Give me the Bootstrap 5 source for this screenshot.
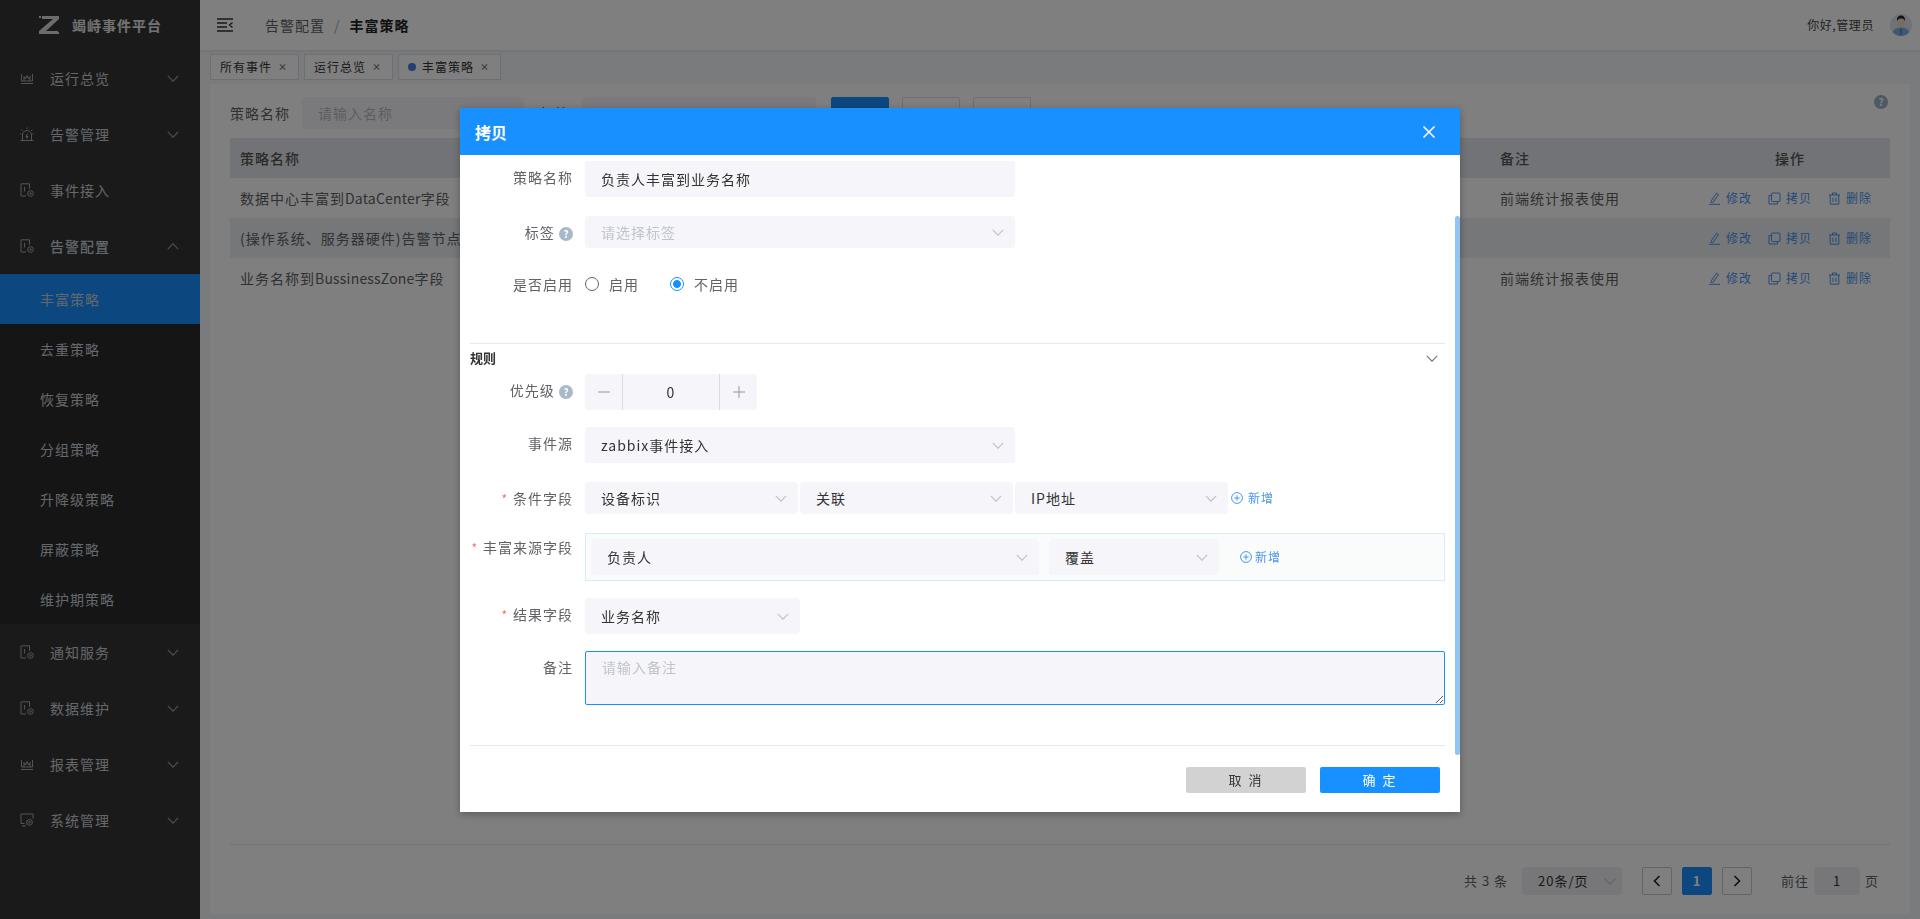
<!DOCTYPE html>
<html lang="zh">
<head>
<meta charset="utf-8">
<title>竭峙事件平台</title>
<link rel="stylesheet" href="https://cdn.jsdelivr.net/npm/bootstrap@5.3.0/dist/css/bootstrap.min.css">
<style>
html,body{height:100%;}
body{font-family:"Noto Sans CJK SC","Liberation Sans",sans-serif;font-size:14px;letter-spacing:1px;color:#333;background:#f5f7fa;overflow:hidden;}
.app-main{min-width:0;}
.app-side{width:200px;flex:none;background:#353535;color:#c9cfd6;}
.brand{height:50px;padding-left:39px;gap:13px;font-weight:700;color:#e6e6e6;}
.side-item{height:56px;padding-left:20px;padding-right:21px;gap:16px;}
.side-item.open .chev{transform:rotate(180deg);}
.side-sub{height:50px;padding-left:40px;background:#2a2a2a;}
.side-sub.on{background:#1890ff;}
.ico{width:14px;height:14px;flex:none;stroke:#a8a8a8;fill:none;stroke-width:1;}
.chev{width:12px;height:7px;flex:none;stroke:#c0c4cc;fill:none;stroke-width:1.2;}
.app-side .chev{stroke:#9a9a9a;}
.top-bar{height:50px;background:#fff;padding:0 8px 0 17px;box-shadow:0 1px 4px rgba(0,0,0,.1);position:relative;}
.crumb{margin-left:32px;color:#606266;gap:9px;}
.crumb b{color:#222;}
.crumb i{font-style:normal;color:#aaa;}
.hi{font-size:12px;color:#444;margin-right:16px;letter-spacing:.6px;}
.tag-bar{height:34px;padding:4px 10px;gap:5px;}
.tab-chip{height:26px;padding:0 11px 0 9px;border:1px solid #dcdfe6;background:#fff;font-size:12px;color:#333;gap:6px;}
.tab-chip .x{font-size:9px;color:#777;font-weight:700;letter-spacing:0;}
.tab-dot{width:8px;height:8px;border-radius:50%;background:#4a7fe8;}
.page-card{flex:1;background:#fff;margin:0 10px 5px;padding:13px 20px 0;min-height:0;}
.filter-row{height:32px;margin-bottom:9px;}
.q-label{color:#606266;width:72px;}
.q-box{height:32px;background:#f5f5fa;border-radius:4px;padding:0 16px;display:flex;align-items:center;color:#bbb;}
.q-box.w1{width:222px;margin-right:16px;}
.q-box.w2{width:234px;margin-left:12px;margin-right:15px;}
.q-btn{width:58px;height:32px;border:1px solid #dcdfe6;margin-right:13px;border-radius:2px;}
.q-btn.pri{background:#1890ff;border-color:#1890ff;}
.help-dot{width:14px;height:14px;border-radius:50%;background:#a9b9c9;color:#fff;font-size:10px;line-height:14px;text-align:center;letter-spacing:0;display:inline-block;font-weight:700;flex:none;}
.big-help{margin-left:auto;margin-right:2px;margin-top:-22px;background:#9fb2c6;}
.data-table{table-layout:fixed;width:100%;margin:0;--bs-table-bg:transparent;}
.data-table .col-a{width:1260px;}
.data-table .col-b{width:200px;}
.data-table .col-c{width:200px;}
.data-table th,.data-table td{border:0;padding:0 10px;height:40px;vertical-align:middle;color:#606266;font-weight:400;white-space:nowrap;overflow:hidden;}
.data-table thead th{background:#e5e7ec;color:#555;font-weight:500;}
.data-table tbody tr:nth-child(2) td{background:#eceef2;}
.data-table .op-cell{padding:0;}
.lat{letter-spacing:.2px;}
.op-wrap{padding-right:2px;}
.op-link{font-size:12px;color:#4a94f0;gap:5px;margin-right:17px;width:43px;}
.op-link svg{width:13px;height:13px;stroke:currentColor;fill:none;flex:none;}
.pager-line{border-top:1px solid #e4e6eb;margin-top:546px;padding-top:22px;padding-right:11px;justify-content:flex-end;font-size:13px;color:#606266;}
.pg-sel{width:100px;height:28px;background:#eeeef3;border-radius:4px;margin:0 20px 0 14px;padding:0 6px 0 16px;color:#333;}
.pg-btn{width:30px;height:28px;border:1px solid #c8c8cc;border-radius:2px;margin-right:10px;color:#333;}
.pg-btn svg{width:8px;height:12px;stroke:#222;stroke-width:1.6;fill:none;}
.pg-btn.on{background:#1890ff;border-color:#1890ff;color:#fff;font-weight:700;}
.pg-go{margin-left:19px;}
.pg-in{width:46px;height:28px;background:#eeeef3;border-radius:4px;margin:0 5px;color:#333;}
.veil{position:fixed;inset:0;background:rgba(0,0,0,.5);}
.dlg{position:fixed;left:460px;top:108px;width:1000px;height:704px;background:#fff;box-shadow:0 2px 8px rgba(0,0,0,.3);display:flex;flex-direction:column;}
.dlg-head{height:47px;flex:none;background:#1890ff;color:#fff;padding:0 24px 0 15px;font-size:16px;font-weight:700;letter-spacing:0;}
.dlg-x{width:14px;height:14px;stroke:#fff;stroke-width:1.6;fill:none;}
.dlg-body{flex:1;padding:6px 15px 0 10px;position:relative;}
.dlg-scroll{position:absolute;right:0;top:61px;width:5px;height:539px;background:#90c4f3;border-radius:3px;}
.f-row{display:flex;align-items:flex-start;}
.gap-19{margin-bottom:19px;}
.gap-20{margin-bottom:20px;}
.gap-18{margin-bottom:18px;}
.gap-17{margin-bottom:17px;}
.f-lab{width:115px;padding-right:12px;text-align:right;color:#606266;line-height:32px;flex:none;}
.f-lab.tight{line-height:28px;}
.req{color:#f56c6c;margin-right:5px;font-size:12px;}
.f-in{background:#f5f5fa;border:0;border-radius:4px;padding:0 11px 0 16px;color:#333;display:flex;align-items:center;justify-content:space-between;font-family:inherit;font-size:14px;letter-spacing:1px;}
.f-in.ph{color:#c0c4cc;}
.h36{height:36px;}
.h32{height:32px;}
.w430{width:430px;}
.w213{width:213px;}
.w215{width:215px;}
.w448{width:448px;}
.w170{width:170px;}
.radio-wrap{height:32px;}
.radio-t{appearance:none;width:14px;height:14px;border-radius:50%;border:1px solid #606266;margin:0;background:#fff;flex:none;}
.radio-t:checked{border-color:#1890ff;background:radial-gradient(circle,#1890ff 0,#1890ff 3.6px,#fff 4.2px);}
.radio-lab{gap:10px;color:#606266;margin-right:24px;white-space:nowrap;}
.radio-lab.first{width:61px;}
.rule-line{border-top:1px solid #e8e8ee;margin-top:43px;padding-right:7px;padding-bottom:2px;height:31px;}
.rule-line b{font-size:13px;color:#333;letter-spacing:0;}
.rule-line .chev{stroke:#777;}
.stepper{width:172px;height:36px;background:#f5f5fa;border-radius:4px;color:#333;}
.st-end{width:37px;height:100%;}
.st-end svg{width:14px;height:14px;stroke:#999;fill:none;}
.st-mid{flex:1;height:100%;border-left:1px solid #ddd;border-right:1px solid #ddd;}
.add-lnk{color:#4a94f0;font-size:12px;gap:5px;}
.add-lnk svg{width:12px;height:12px;stroke:currentColor;fill:none;}
.add-lnk.one{margin-left:1px;}
.add-lnk.two{margin-left:11px;gap:3px;}
.cond-row{gap:2px;}
.src-box{width:860px;height:48px;background:#fafcfc;border:1px solid #d7edf9;padding:5px;gap:10px;}
.note-box{width:860px;height:54px;background:#f5f5fa;border:1px solid #1890ff;border-radius:2px;padding:5px 16px;font-family:inherit;font-size:14px;letter-spacing:1px;display:block;outline:0;}
.note-box::placeholder{color:#c0c4cc;}
.foot-line{border-top:1px solid #e8e8ee;margin:40px 0 0;}
.foot-btns{gap:14px;margin-top:21px;padding-right:5px;}
.dlg-btn{width:120px;height:26px;border:0;border-radius:2px;font-size:13px;letter-spacing:2px;padding:0;line-height:26px;}
.dlg-btn.grey{background:#d2d2d2;color:#333;}
.dlg-btn.blue{background:#1890ff;color:#fff;}
.ava{width:22px;height:22px;flex:none;}
</style>
</head>
<body>
<svg width="0" height="0" class="d-none" aria-hidden="true">
<symbol id="i-chev" viewBox="0 0 12 7"><path d="M.8.8L6 6.200 11.200.8"/></symbol>
<symbol id="i-chart" viewBox="0 0 14 14"><path d="M1.500 3v7h11V3M4 10V5.500l1.500 2.500L7 4.500 8.500 8 10 5.500V10M1 12.500h12"/></symbol>
<symbol id="i-alarm" viewBox="0 0 14 14"><path d="M.5 13.500h13M2.500 13.500V8a4.500 4.500 0 0 1 9 0v5.500M7.500 6.800L6 9.500h2l-1.500 2.500M7 .5V2M1.500 2.500l1.300 1.300M12.500 2.500l-1.300 1.300M.3 7h1.200M12.500 7h1.200"/></symbol>
<symbol id="i-doc" viewBox="0 0 14 14"><path d="M6 13H1V.8h8.500v5M4.500 4v4.500"/><circle cx="10.500" cy="10.500" r="2.800"/><circle cx="10.500" cy="10.500" r=".8"/></symbol>
<symbol id="i-sys" viewBox="0 0 14 14"><path d="M4.500 10.500H1V1h12v4.500M2 13h4"/><path d="M9.500 6.300l2.700 1.500v3l-2.700 1.500-2.700-1.500v-3z"/><circle cx="9.500" cy="9.300" r="1"/></symbol>
<symbol id="i-edit" viewBox="0 0 13 13"><path d="M3.500 8.500L8.500 1.200l2 1.400-5 7.200-2.300.8zM1 12.300h11"/></symbol>
<symbol id="i-copy" viewBox="0 0 13 13"><rect x="3.500" y="1" width="8.500" height="8.500" rx="1"/><path d="M3.500 3.500H1V12h8.500V9.500"/></symbol>
<symbol id="i-del" viewBox="0 0 13 13"><path d="M1 3h11M4.500 3V1h4v2M2.200 3v9.200h8.600V3M5 5.500v4.500M8 5.500v4.500"/></symbol>
<symbol id="i-plus" viewBox="0 0 12 12"><circle cx="6" cy="6" r="5.400"/><path d="M6 3.300v5.400M3.300 6h5.400"/></symbol>
</svg>

<div class="d-flex h-100">
  <aside class="app-side">
    <div class="brand d-flex align-items-center">
      <svg width="20" height="20" viewBox="0 0 20 20" fill="#d8d8d8"><path d="M0 1h2v2H0zM3 1h17v3L7 16h12v3H0v-3L14 4H3zM19 17h1v2h-1z"/></svg>
      <span>竭峙事件平台</span>
    </div>
    <div class="side-item d-flex align-items-center"><svg class="ico"><use href="#i-chart"/></svg><span class="flex-grow-1">运行总览</span><svg class="chev"><use href="#i-chev"/></svg></div>
    <div class="side-item d-flex align-items-center"><svg class="ico"><use href="#i-alarm"/></svg><span class="flex-grow-1">告警管理</span><svg class="chev"><use href="#i-chev"/></svg></div>
    <div class="side-item d-flex align-items-center"><svg class="ico"><use href="#i-doc"/></svg><span class="flex-grow-1">事件接入</span></div>
    <div class="side-item open d-flex align-items-center"><svg class="ico"><use href="#i-doc"/></svg><span class="flex-grow-1 fw-medium">告警配置</span><svg class="chev"><use href="#i-chev"/></svg></div>
    <div class="side-sub on d-flex align-items-center">丰富策略</div>
    <div class="side-sub d-flex align-items-center">去重策略</div>
    <div class="side-sub d-flex align-items-center">恢复策略</div>
    <div class="side-sub d-flex align-items-center">分组策略</div>
    <div class="side-sub d-flex align-items-center">升降级策略</div>
    <div class="side-sub d-flex align-items-center">屏蔽策略</div>
    <div class="side-sub d-flex align-items-center">维护期策略</div>
    <div class="side-item d-flex align-items-center"><svg class="ico"><use href="#i-doc"/></svg><span class="flex-grow-1">通知服务</span><svg class="chev"><use href="#i-chev"/></svg></div>
    <div class="side-item d-flex align-items-center"><svg class="ico"><use href="#i-doc"/></svg><span class="flex-grow-1">数据维护</span><svg class="chev"><use href="#i-chev"/></svg></div>
    <div class="side-item d-flex align-items-center"><svg class="ico"><use href="#i-chart"/></svg><span class="flex-grow-1">报表管理</span><svg class="chev"><use href="#i-chev"/></svg></div>
    <div class="side-item d-flex align-items-center"><svg class="ico"><use href="#i-sys"/></svg><span class="flex-grow-1">系统管理</span><svg class="chev"><use href="#i-chev"/></svg></div>
  </aside>

  <main class="app-main flex-grow-1 d-flex flex-column">
    <header class="top-bar d-flex align-items-center">
      <svg width="16" height="14" viewBox="0 0 16 14" fill="none" stroke="#333" stroke-width="1.400"><path d="M0 1h16M0 5h10M0 9h10M0 13h16M15.500 4.500L12.500 7l3 2.500"/></svg>
      <div class="crumb d-flex align-items-center"><span>告警配置</span><i>/</i><b>丰富策略</b></div>
      <div class="ms-auto hi">你好,管理员</div>
      <svg class="ava" viewBox="0 0 22 22"><circle cx="11" cy="11" r="11" fill="#dfe5ec"/><path d="M2.500 18c2-3.500 5-4.500 8.500-4.500s6.500 1 8.500 4.500a11 11 0 0 1-17 0z" fill="#7fb2e0"/><ellipse cx="11" cy="8" rx="4" ry="5" fill="#efd9c8"/><path d="M7 7c-.5-4 2-5.500 4-5.500S15.500 3 15 7c-1-2-2-2.500-4-2.500S8 5 7 7z" fill="#222"/><path d="M11 14.500v6" stroke="#2a6cb0"/></svg>
    </header>
    <div class="tag-bar d-flex">
      <div class="tab-chip d-flex align-items-center">所有事件<span class="x">×</span></div>
      <div class="tab-chip d-flex align-items-center">运行总览<span class="x">×</span></div>
      <div class="tab-chip d-flex align-items-center"><span class="tab-dot"></span>丰富策略<span class="x">×</span></div>
    </div>
    <section class="page-card">
      <div class="filter-row d-flex align-items-center">
        <span class="q-label">策略名称</span><div class="q-box w1">请输入名称</div>
        <span>标签</span><div class="q-box w2"></div>
        <div class="q-btn pri"></div><div class="q-btn"></div><div class="q-btn"></div>
        <span class="help-dot big-help">?</span>
      </div>
      <table class="table data-table">
        <colgroup><col class="col-a"><col class="col-b"><col class="col-c"></colgroup>
        <thead><tr><th>策略名称</th><th>备注</th><th class="text-center">操作</th></tr></thead>
        <tbody>
          <tr><td>数据中心丰富到<span class="lat">DataCenter</span>字段</td><td>前端统计报表使用</td><td class="op-cell"><div class="op-wrap d-flex justify-content-end"><span class="op-link d-flex align-items-center"><svg><use href="#i-edit"/></svg>修改</span><span class="op-link d-flex align-items-center"><svg><use href="#i-copy"/></svg>拷贝</span><span class="op-link d-flex align-items-center"><svg><use href="#i-del"/></svg>删除</span></div></td></tr>
          <tr><td>(操作系统、服务器硬件)告警节点</td><td></td><td class="op-cell"><div class="op-wrap d-flex justify-content-end"><span class="op-link d-flex align-items-center"><svg><use href="#i-edit"/></svg>修改</span><span class="op-link d-flex align-items-center"><svg><use href="#i-copy"/></svg>拷贝</span><span class="op-link d-flex align-items-center"><svg><use href="#i-del"/></svg>删除</span></div></td></tr>
          <tr><td>业务名称到<span class="lat">BussinessZone</span>字段</td><td>前端统计报表使用</td><td class="op-cell"><div class="op-wrap d-flex justify-content-end"><span class="op-link d-flex align-items-center"><svg><use href="#i-edit"/></svg>修改</span><span class="op-link d-flex align-items-center"><svg><use href="#i-copy"/></svg>拷贝</span><span class="op-link d-flex align-items-center"><svg><use href="#i-del"/></svg>删除</span></div></td></tr>
        </tbody>
      </table>
      <div class="pager-line d-flex align-items-center">
        <span>共 3 条</span>
        <div class="pg-sel d-flex align-items-center justify-content-between"><span>20条/页</span><svg class="chev"><use href="#i-chev"/></svg></div>
        <div class="pg-btn d-flex align-items-center justify-content-center"><svg viewBox="0 0 8 12"><path d="M6.500 1L1.500 6l5 5"/></svg></div>
        <div class="pg-btn on d-flex align-items-center justify-content-center">1</div>
        <div class="pg-btn d-flex align-items-center justify-content-center"><svg viewBox="0 0 8 12"><path d="M1.500 1l5 5-5 5"/></svg></div>
        <span class="pg-go">前往</span>
        <div class="pg-in d-flex align-items-center justify-content-center">1</div>
        <span>页</span>
      </div>
    </section>
  </main>
</div>

<div class="veil"></div>

<div class="dlg" role="dialog">
  <div class="dlg-head d-flex align-items-center justify-content-between"><span>拷贝</span><svg class="dlg-x" viewBox="0 0 14 14"><path d="M1.500 1.500l11 11M12.500 1.500l-11 11"/></svg></div>
  <div class="dlg-body">
    <div class="dlg-scroll"></div>
    <div class="f-row gap-19"><div class="f-lab">策略名称</div><div class="f-in h36 w430">负责人丰富到业务名称</div></div>
    <div class="f-row gap-20"><div class="f-lab">标签 <span class="help-dot">?</span></div><div class="f-in ph h32 w430"><span>请选择标签</span><svg class="chev"><use href="#i-chev"/></svg></div></div>
    <div class="f-row"><div class="f-lab">是否启用</div><div class="radio-wrap d-flex align-items-center"><label class="radio-lab first d-flex align-items-center"><input class="radio-t" type="radio" name="en">启用</label><label class="radio-lab d-flex align-items-center"><input class="radio-t" type="radio" name="en" checked>不启用</label></div></div>
    <div class="rule-line d-flex justify-content-between align-items-center"><b>规则</b><svg class="chev"><use href="#i-chev"/></svg></div>
    <div class="f-row gap-17"><div class="f-lab">优先级 <span class="help-dot">?</span></div><div class="stepper d-flex align-items-center"><span class="st-end d-flex align-items-center justify-content-center"><svg viewBox="0 0 14 14"><path d="M1 7h12"/></svg></span><span class="st-mid d-flex align-items-center justify-content-center">0</span><span class="st-end d-flex align-items-center justify-content-center"><svg viewBox="0 0 14 14"><path d="M1 7h12M7 1v12"/></svg></span></div></div>
    <div class="f-row gap-19"><div class="f-lab">事件源</div><div class="f-in h36 w430"><span>zabbix事件接入</span><svg class="chev"><use href="#i-chev"/></svg></div></div>
    <div class="f-row gap-18"><div class="f-lab"><span class="req">*</span>条件字段</div><div class="cond-row d-flex align-items-center"><div class="f-in h32 w213"><span>设备标识</span><svg class="chev"><use href="#i-chev"/></svg></div><div class="f-in h32 w213"><span>关联</span><svg class="chev"><use href="#i-chev"/></svg></div><div class="f-in h32 w213"><span>IP地址</span><svg class="chev"><use href="#i-chev"/></svg></div><span class="add-lnk one d-inline-flex align-items-center"><svg><use href="#i-plus"/></svg>新增</span></div></div>
    <div class="f-row gap-17"><div class="f-lab tight"><span class="req">*</span>丰富来源字段</div><div class="src-box d-flex align-items-center"><div class="f-in h36 w448"><span>负责人</span><svg class="chev"><use href="#i-chev"/></svg></div><div class="f-in h36 w170"><span>覆盖</span><svg class="chev"><use href="#i-chev"/></svg></div><span class="add-lnk two d-inline-flex align-items-center"><svg><use href="#i-plus"/></svg>新增</span></div></div>
    <div class="f-row gap-17"><div class="f-lab"><span class="req">*</span>结果字段</div><div class="f-in h36 w215"><span>业务名称</span><svg class="chev"><use href="#i-chev"/></svg></div></div>
    <div class="f-row"><div class="f-lab">备注</div><textarea class="note-box" placeholder="请输入备注"></textarea></div>
    <div class="foot-line"></div>
    <div class="foot-btns d-flex justify-content-end"><button class="dlg-btn grey" type="button">取 消</button><button class="dlg-btn blue" type="button">确 定</button></div>
  </div>
</div>
<script src="https://cdn.jsdelivr.net/npm/bootstrap@5.3.0/dist/js/bootstrap.bundle.min.js"></script>
</body>
</html>
